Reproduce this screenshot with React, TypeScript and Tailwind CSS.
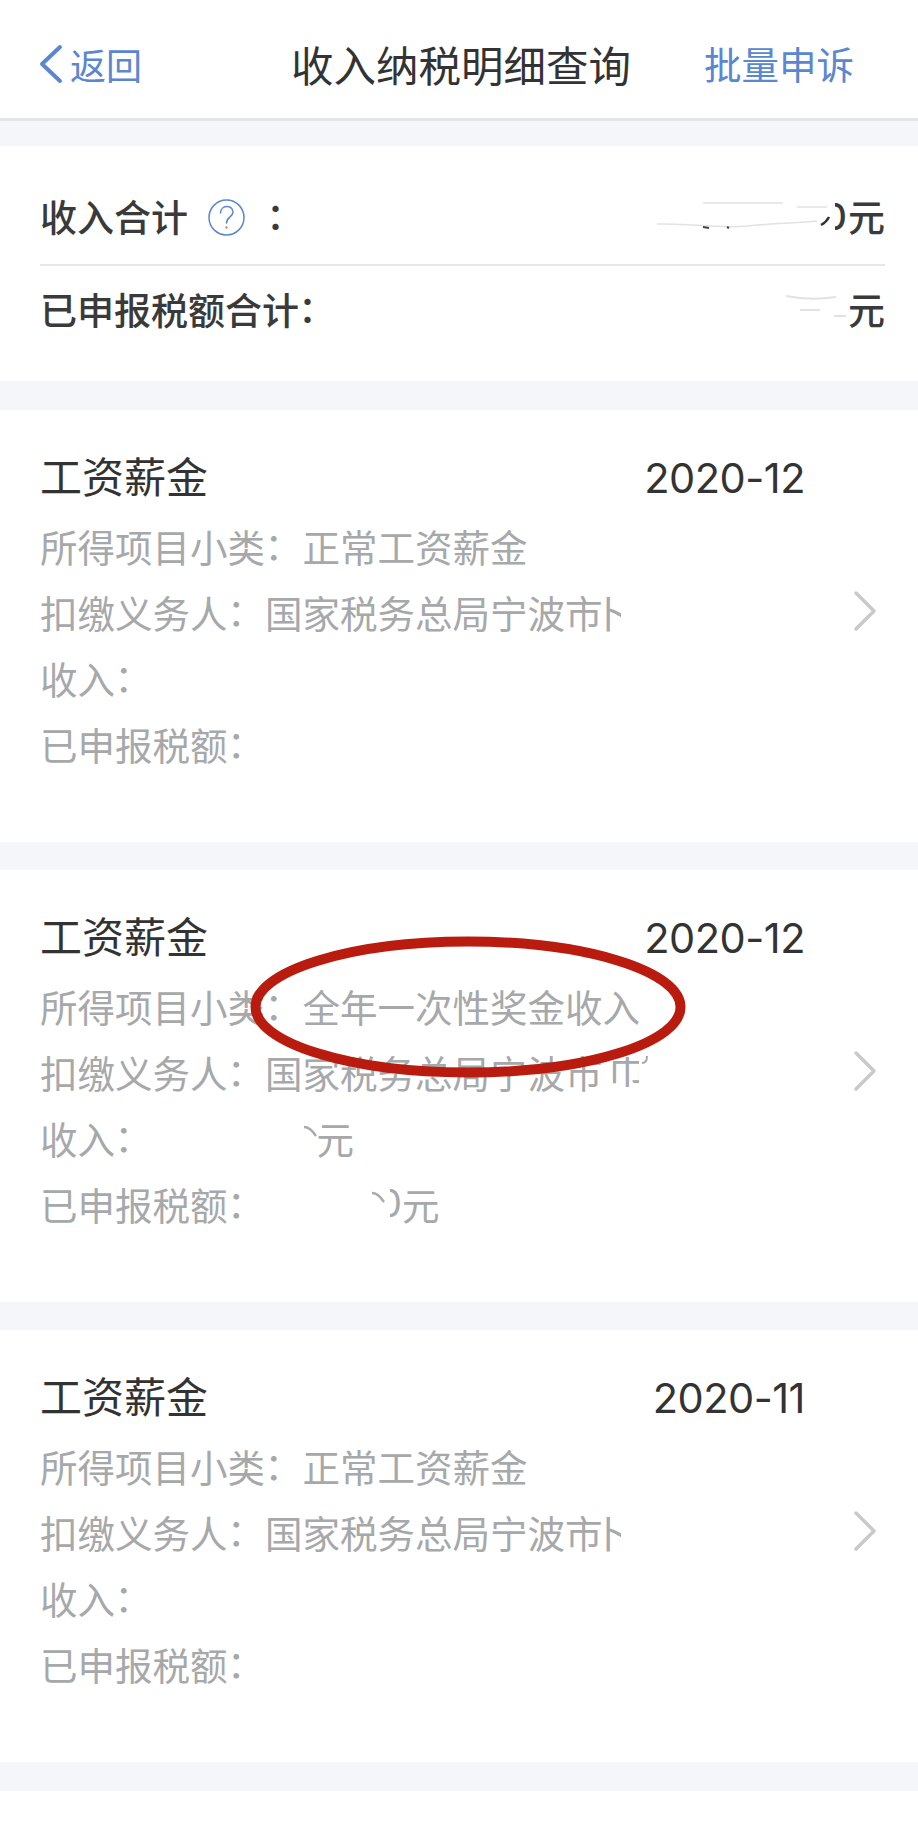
const font = { fontFamily: '"Noto Sans CJK SC", sans-serif' }

function Tick({ w = 14, color = '#a8aaac' }: { w?: number; color?: string }) {
  return (
    <svg width={w} height="14" viewBox="0 0 14 14" className="shrink-0 self-start mt-[15px]">
      <path d="M1 2 C5 2 9 5 13 11" fill="none" stroke={color} strokeWidth="2.5" />
    </svg>
  )
}

// half of a zero left over from the redaction
function HalfZero({ className }: { className: string }) {
  return (
    <span className={`inline-flex justify-end overflow-hidden w-[12px] font-['Inter'] ${className}`}>
      <span>0</span>
    </span>
  )
}

function Colon({ className = '' }: { className?: string }) {
  return <span className={`font-['Noto_Sans_CJK_TC'] ${className}`}>：</span>
}

function Row({ label, children }: { label: string; children?: React.ReactNode }) {
  return (
    <div className="flex h-[66px] items-center whitespace-nowrap text-[37.5px] text-[#a6a8aa]">
      <span>{label}</span>
      <Colon className="-ml-[10px] mr-[10px]" />
      {children}
    </div>
  )
}

type CardProps = {
  date: string
  type: string
  tail: React.ReactNode
  income?: React.ReactNode
  tax?: React.ReactNode
  children?: React.ReactNode
}

function Card({ date, type, tail, income, tax, children }: CardProps) {
  return (
    <section className="relative flex items-center bg-white pl-[40px] pr-[41px] pt-[35px] pb-[65px]">
      <div className="w-[765px]">
        <div className="flex h-[66px] items-center justify-between text-[#333333]">
          <span className="pb-[7px] text-[42px]">工资薪金</span>
          <span className="font-['Inter'] text-[41.5px] tracking-[-0.5px]">{date}</span>
        </div>
        <div className="mt-[2px]">
          <Row label="所得项目小类">
            <span>{type}</span>
          </Row>
          <Row label="扣缴义务人">
            <span>国家税务总局宁波市</span>
            {tail}
          </Row>
          <Row label="收入">{income}</Row>
          <Row label="已申报税额">{tax}</Row>
        </div>
      </div>
      <svg width="24" height="42" viewBox="0 0 24 42" className="ml-auto">
        <path d="M3 3 L21 21 L3 39" fill="none" stroke="#c9c9c9" strokeWidth="3.5" strokeLinecap="round" strokeLinejoin="round" />
      </svg>
      {children}
    </section>
  )
}

function Gap({ h }: { h: string }) {
  return <div className={`${h} bg-[#f4f6f9]`} />
}

const partialChar = (
  <span className="flex w-[18px] justify-center overflow-hidden">
    <span>卜</span>
  </span>
)

export default function App() {
  return (
    <div className="min-h-screen bg-white" style={font}>
      <header className="flex h-[121px] items-center border-b-[3px] border-[#e3e5e9] bg-white pl-[39px] pr-[64px] pt-[9px]">
        <div className="flex w-[252px] items-center">
          <svg width="24" height="40" viewBox="0 0 24 40">
            <path d="M21 3 L3 20 L21 37" fill="none" stroke="#5b86d0" strokeWidth="4" strokeLinecap="round" strokeLinejoin="round" />
          </svg>
          <span className="ml-[7px] text-[36px] text-[#5b86d0]">返回</span>
        </div>
        <h1 className="text-[42.5px] font-normal text-[#333333]">收入纳税明细查询</h1>
        <button className="ml-auto text-[37.5px] text-[#5b86d0]">批量申诉</button>
      </header>
      <Gap h="h-[25px]" />

      <section className="bg-white pl-[40px] pr-[33px] text-[37px] font-medium text-[#3a3a3a]">
        <div className="flex h-[120px] items-end justify-between border-b-[2px] border-[#e6e6e6] pb-[17px]">
          <div className="flex h-[60px] items-center">
            <span>收入合计</span>
            <svg width="37" height="37" viewBox="0 0 37 37" className="ml-[20px]">
              <circle cx="18.5" cy="18.5" r="17.5" fill="none" stroke="#5b86d0" strokeWidth="1.5" />
              <path d="M12.5 14 C12.5 5.5 25 5.5 25 13 C25 18 18.5 18 18.5 24" fill="none" stroke="#5b86d0" strokeWidth="1.5" strokeLinecap="round" />
              <circle cx="18.5" cy="28.5" r="1.2" fill="#c98a8a" />
            </svg>
            <Colon className="ml-[12px]" />
          </div>
          <div className="flex h-[60px] items-center">
            <svg width="178" height="36" viewBox="0 0 178 36" className="shrink-0">
              <path d="M46 4 H126 M140 8 H170 M0 25 C40 24 60 30 90 27 C120 24 140 24 160 22" fill="none" stroke="#e2e2e2" strokeWidth="1.5" />
              <path d="M46 28 L52 29 M70 28 L72 29" stroke="#444" strokeWidth="2" />
              <path d="M164 26 C168 24 170 22 172 18" fill="none" stroke="#333" strokeWidth="2.5" />
            </svg>
            <HalfZero className="mr-[1px]" />
            <span>元</span>
          </div>
        </div>
        <div className="flex h-[115px] justify-between pt-[14px]">
          <div className="flex h-[60px] items-center">
            <span>已申报税额合计</span>
            <Colon className="-ml-[10px]" />
          </div>
          <div className="flex h-[60px] items-center">
            <svg width="62" height="36" viewBox="0 0 62 36" className="shrink-0">
              <path d="M0 4 C10 6 30 8 50 5 M14 18 H34 M48 24 H60" fill="none" stroke="#e2e2e2" strokeWidth="2" />
            </svg>
            <span>元</span>
          </div>
        </div>
      </section>
      <Gap h="h-[29px]" />

      <Card date="2020-12" type="正常工资薪金" tail={partialChar} />
      <Gap h="h-[28px]" />

      <Card
        date="2020-12"
        type="全年一次性奖金收入"
        tail={
          <>
            <span className="ml-[6px] flex h-[30px] w-[30px] items-start overflow-hidden leading-[24px]">巾</span>
            <svg width="8" height="10" viewBox="0 0 8 10" className="mb-[24px] ml-[2px]">
              <path d="M1 8 C5 8 6 5 6 1" fill="none" stroke="#a6a8aa" strokeWidth="2" />
            </svg>
          </>
        }
        income={
          <span className="ml-[150px] flex items-center">
            <Tick />
            <span>元</span>
          </span>
        }
        tax={
          <span className="ml-[106px] flex items-center">
            <Tick />
            <HalfZero className="ml-[5px] w-[11px]" />
            <span>元</span>
          </span>
        }
      >
        <svg width="450" height="156" viewBox="0 0 450 156" className="absolute left-[243px] top-[60px]">
          <ellipse cx="225" cy="77" rx="212.5" ry="65.5" fill="none" stroke="#b91c0e" strokeWidth="10" />
        </svg>
      </Card>
      <Gap h="h-[28px]" />

      <Card date="2020-11" type="正常工资薪金" tail={partialChar} />
      <Gap h="h-[29px]" />
    </div>
  )
}
